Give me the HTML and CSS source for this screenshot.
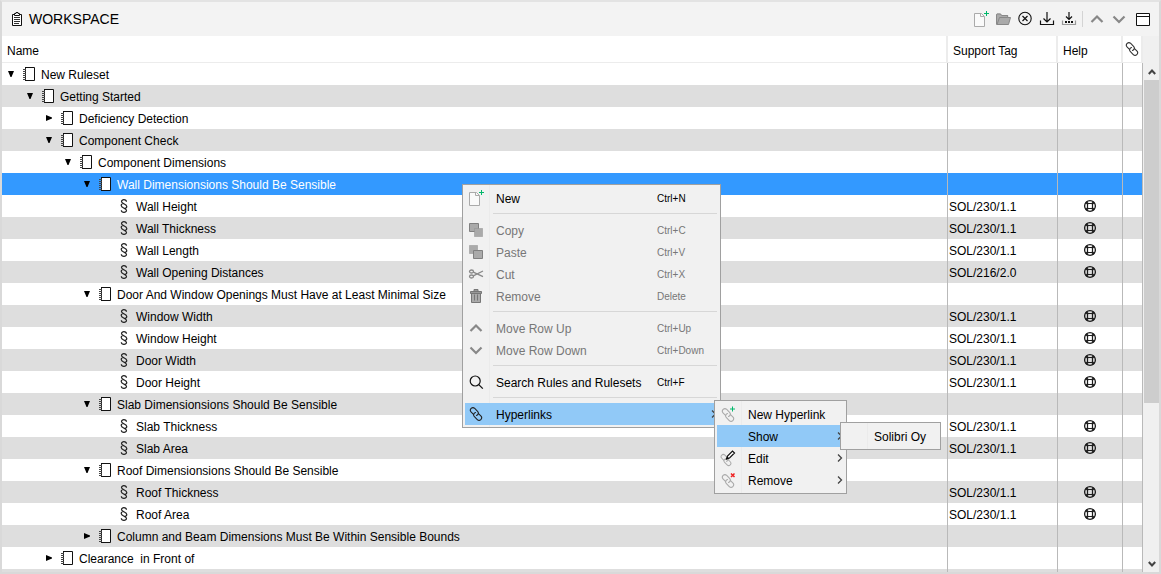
FILE: index.html
```html
<!DOCTYPE html>
<html lang="en">
<head>
<meta charset="utf-8">
<title>Workspace</title>
<link rel="stylesheet" href="styles.css">
</head>
<body>
<svg class="sprite" aria-hidden="true">
  <symbol id="book" viewBox="0 0 14 14"><path d="M3 .5h9.500v13H3z" fill="#fff"/><path d="M3 .5h9.500v13H3" fill="none" stroke="#111"/><path d="M3.500 1v12" stroke="#222" stroke-dasharray="1 1"/><path d="M1 2.500h3M1 4.500h3M1 6.500h3M1 8.500h3M1 10.500h3M1 12.500h3" stroke="#444"/></symbol>
  <symbol id="section" viewBox="0 0 14 14"><path d="M9.500 2.800C9.200 0 4.500 0 4.500 2.600c0 2.200 5.300 2.200 5.300 5 0 1.200-1.100 1.800-2.300 1.800M4.300 11.200c.3 2.800 5.200 2.800 5.200.2 0-2.300-5.300-2.200-5.300-5 0-1.200 1.100-1.900 2.300-1.900" fill="none" stroke="#222" stroke-width="1.200"/></symbol>
  <symbol id="expanded" viewBox="0 0 10 10"><path d="M2 2h6L5.500 8h-1z"/></symbol>
  <symbol id="collapsed" viewBox="0 0 10 10"><path d="M2 2l6 2.500v1L2 8z"/></symbol>
  <symbol id="lifebuoy" viewBox="0 0 14 14"><circle cx="7" cy="7" r="5.400" fill="none" stroke="#1c1c1c" stroke-width="1.300"/><path d="M3 3l2 2M11 3L9 5M3 11l2-2M11 11L9 9" stroke="#1c1c1c" stroke-width="2.200"/><rect x="4.500" y="4.500" width="5" height="5" rx="1" fill="none" stroke="#1c1c1c" stroke-width="1.200"/></symbol>
  <symbol id="link" viewBox="0 0 16 16"><g fill="none" stroke="currentColor" stroke-width="1.100" stroke-linecap="round" transform="rotate(45 8 8)"><path d="M6.500 10H3.200c-3.400 0-3.400-5 0-5h4c2.200 0 3.100 2 2.200 3.700"/><path d="M9.500 6h3.300c3.400 0 3.400 5 0 5h-4c-2.200 0-3.100-2-2.200-3.700"/></g></symbol>
  <symbol id="new-file" viewBox="0 0 18 18"><path d="M2.500 3.500h7l3 3v10h-10z" fill="#fafafa" stroke="#aaa"/><path d="M8.500 3.500v3h4" fill="none" stroke="#aaa"/><path d="M12 3.500h5M14.500 1v5" stroke="#00b86b"/></symbol>
  <symbol id="up" viewBox="0 0 16 16"><path d="M2.500 11L8 5.500l5.500 5.500" fill="none" stroke="currentColor" stroke-width="2.200"/></symbol>
  <symbol id="down" viewBox="0 0 16 16"><path d="M2.500 5.500L8 11l5.500-5.500" fill="none" stroke="currentColor" stroke-width="2.200"/></symbol>
  <symbol id="right" viewBox="0 0 8 8"><path d="M2 .5L5.500 4 2 7.500" fill="none" stroke="#444" stroke-width="1.300"/></symbol>
</svg>

<main class="workspace">
  <header class="titlebar">
    <svg class="i14" viewBox="0 0 14 14"><path d="M2.500 2.500h9v11h-9z" fill="#fff" stroke="#111"/><path d="M4.500 3.500v-2h1.500v-1h2v1h1.500v2z" fill="#fff" stroke="#111"/><path d="M4 5.500h6M4 7.500h6M4 9.500h6M4 11.500h5" stroke="#333"/></svg>
    <h1>WORKSPACE</h1>
    <div class="tools">
      <button aria-label="New"><svg class="i18"><use href="#new-file"/></svg></button>
      <button aria-label="Open"><svg class="i16" viewBox="0 0 16 16"><path d="M1 13.500V3.500l1-1h3.500l1.200 1.500H13v2.500h2.500l-2 7z" fill="#aaa"/><path d="M1.500 13.500V3.500l.5-.5h3.500l1.200 1.500h6V6.500H4.500l-2.500 7h11.500l2-7h-3" fill="none" stroke="#888"/></svg></button>
      <button aria-label="Close"><svg class="i16" viewBox="0 0 16 16"><circle cx="8" cy="7.500" r="6.200" fill="none" stroke="#111" stroke-width="1.100"/><path d="M5.500 5l5 5M10.500 5l-5 5" stroke="#111" stroke-width="1.200"/></svg></button>
      <button aria-label="Save"><svg class="i16" viewBox="0 0 16 16"><path d="M1.500 9.500v4h13v-4M8 1v9.500M4.500 7.500L8 11l3.500-3.500" fill="none" stroke="#111" stroke-width="1.200"/></svg></button>
      <button aria-label="Save As"><svg class="i16" viewBox="0 0 16 16"><path d="M1.500 9.500v4h13v-4" fill="none" stroke="#999" stroke-width="1.200"/><path d="M8 1v7.500M5 5.500L8 8.500l3-3" fill="none" stroke="#111" stroke-width="1.200"/><path d="M4 11h2M7 11h2M10 11h2" stroke="#111" stroke-width="2"/></svg></button>
      <span class="divider"></span>
      <button class="grey" aria-label="Previous"><svg class="i16"><use href="#up"/></svg></button>
      <button class="grey" aria-label="Next"><svg class="i16"><use href="#down"/></svg></button>
      <button class="window" aria-label="Window"><svg class="i16" viewBox="0 0 16 16"><path d="M1.500 2.500h13v12h-13z" fill="#fff" stroke="#111"/><path d="M1 5.500h14" stroke="#111"/></svg></button>
    </div>
  </header>

  <div class="pane">
    <div class="view">
    <table>
      <colgroup><col><col class="c-tag"><col class="c-help"><col class="c-link"></colgroup>
      <thead><tr><th>Name</th><th>Support Tag</th><th>Help</th><th class="icon-head"><svg class="i16" role="img" aria-label="Hyperlinks"><use href="#link"/></svg></th></tr></thead>
      <tbody>
        <tr><td><div class="node l0"><button class="toggle" aria-label="Collapse"><svg><use href="#expanded"/></svg></button><svg class="i14"><use href="#book"/></svg><span>New Ruleset</span></div></td><td></td><td></td><td></td></tr>
        <tr><td><div class="node l1"><button class="toggle" aria-label="Collapse"><svg><use href="#expanded"/></svg></button><svg class="i14"><use href="#book"/></svg><span>Getting Started</span></div></td><td></td><td></td><td></td></tr>
        <tr><td><div class="node l2"><button class="toggle" aria-label="Expand"><svg><use href="#collapsed"/></svg></button><svg class="i14"><use href="#book"/></svg><span>Deficiency Detection</span></div></td><td></td><td></td><td></td></tr>
        <tr><td><div class="node l2"><button class="toggle" aria-label="Collapse"><svg><use href="#expanded"/></svg></button><svg class="i14"><use href="#book"/></svg><span>Component Check</span></div></td><td></td><td></td><td></td></tr>
        <tr><td><div class="node l3"><button class="toggle" aria-label="Collapse"><svg><use href="#expanded"/></svg></button><svg class="i14"><use href="#book"/></svg><span>Component Dimensions</span></div></td><td></td><td></td><td></td></tr>
        <tr class="selected"><td><div class="node l4"><button class="toggle" aria-label="Collapse"><svg><use href="#expanded"/></svg></button><svg class="i14"><use href="#book"/></svg><span>Wall Dimensionsions Should Be Sensible</span></div></td><td></td><td></td><td></td></tr>
        <tr><td><div class="node rule"><svg class="i14"><use href="#section"/></svg><span>Wall Height</span></div></td><td><span>SOL/230/1.1</span></td><td><button class="help" aria-label="Help"><svg class="i14"><use href="#lifebuoy"/></svg></button></td><td></td></tr>
        <tr><td><div class="node rule"><svg class="i14"><use href="#section"/></svg><span>Wall Thickness</span></div></td><td><span>SOL/230/1.1</span></td><td><button class="help" aria-label="Help"><svg class="i14"><use href="#lifebuoy"/></svg></button></td><td></td></tr>
        <tr><td><div class="node rule"><svg class="i14"><use href="#section"/></svg><span>Wall Length</span></div></td><td><span>SOL/230/1.1</span></td><td><button class="help" aria-label="Help"><svg class="i14"><use href="#lifebuoy"/></svg></button></td><td></td></tr>
        <tr><td><div class="node rule"><svg class="i14"><use href="#section"/></svg><span>Wall Opening Distances</span></div></td><td><span>SOL/216/2.0</span></td><td><button class="help" aria-label="Help"><svg class="i14"><use href="#lifebuoy"/></svg></button></td><td></td></tr>
        <tr><td><div class="node l4"><button class="toggle" aria-label="Collapse"><svg><use href="#expanded"/></svg></button><svg class="i14"><use href="#book"/></svg><span>Door And Window Openings Must Have at Least Minimal Size</span></div></td><td></td><td></td><td></td></tr>
        <tr><td><div class="node rule"><svg class="i14"><use href="#section"/></svg><span>Window Width</span></div></td><td><span>SOL/230/1.1</span></td><td><button class="help" aria-label="Help"><svg class="i14"><use href="#lifebuoy"/></svg></button></td><td></td></tr>
        <tr><td><div class="node rule"><svg class="i14"><use href="#section"/></svg><span>Window Height</span></div></td><td><span>SOL/230/1.1</span></td><td><button class="help" aria-label="Help"><svg class="i14"><use href="#lifebuoy"/></svg></button></td><td></td></tr>
        <tr><td><div class="node rule"><svg class="i14"><use href="#section"/></svg><span>Door Width</span></div></td><td><span>SOL/230/1.1</span></td><td><button class="help" aria-label="Help"><svg class="i14"><use href="#lifebuoy"/></svg></button></td><td></td></tr>
        <tr><td><div class="node rule"><svg class="i14"><use href="#section"/></svg><span>Door Height</span></div></td><td><span>SOL/230/1.1</span></td><td><button class="help" aria-label="Help"><svg class="i14"><use href="#lifebuoy"/></svg></button></td><td></td></tr>
        <tr><td><div class="node l4"><button class="toggle" aria-label="Collapse"><svg><use href="#expanded"/></svg></button><svg class="i14"><use href="#book"/></svg><span>Slab Dimensionsions Should Be Sensible</span></div></td><td></td><td></td><td></td></tr>
        <tr><td><div class="node rule"><svg class="i14"><use href="#section"/></svg><span>Slab Thickness</span></div></td><td><span>SOL/230/1.1</span></td><td><button class="help" aria-label="Help"><svg class="i14"><use href="#lifebuoy"/></svg></button></td><td></td></tr>
        <tr><td><div class="node rule"><svg class="i14"><use href="#section"/></svg><span>Slab Area</span></div></td><td><span>SOL/230/1.1</span></td><td><button class="help" aria-label="Help"><svg class="i14"><use href="#lifebuoy"/></svg></button></td><td></td></tr>
        <tr><td><div class="node l4"><button class="toggle" aria-label="Collapse"><svg><use href="#expanded"/></svg></button><svg class="i14"><use href="#book"/></svg><span>Roof Dimensionsions Should Be Sensible</span></div></td><td></td><td></td><td></td></tr>
        <tr><td><div class="node rule"><svg class="i14"><use href="#section"/></svg><span>Roof Thickness</span></div></td><td><span>SOL/230/1.1</span></td><td><button class="help" aria-label="Help"><svg class="i14"><use href="#lifebuoy"/></svg></button></td><td></td></tr>
        <tr><td><div class="node rule"><svg class="i14"><use href="#section"/></svg><span>Roof Area</span></div></td><td><span>SOL/230/1.1</span></td><td><button class="help" aria-label="Help"><svg class="i14"><use href="#lifebuoy"/></svg></button></td><td></td></tr>
        <tr><td><div class="node l4"><button class="toggle" aria-label="Expand"><svg><use href="#collapsed"/></svg></button><svg class="i14"><use href="#book"/></svg><span>Column and Beam Dimensions Must Be Within Sensible Bounds</span></div></td><td></td><td></td><td></td></tr>
        <tr><td><div class="node l2"><button class="toggle" aria-label="Expand"><svg><use href="#collapsed"/></svg></button><svg class="i14"><use href="#book"/></svg><span>Clearance  in Front of</span></div></td><td></td><td></td><td></td></tr>
        <tr><td></td><td></td><td></td><td></td></tr>
      </tbody>
    </table>
    </div>
    <div class="scrollbar">
      <button aria-label="Scroll up"><svg viewBox="0 0 8 8"><path d="M.8 6L4 2.500 7.200 6" fill="none" stroke="#444" stroke-width="2"/></svg></button>
      <div class="track"><div class="thumb"></div></div>
      <button aria-label="Scroll down"><svg viewBox="0 0 8 8"><path d="M.8 2L4 5.500 7.200 2" fill="none" stroke="#444" stroke-width="2"/></svg></button>
    </div>
  </div>

  <div class="menu context" role="menu">
    <button class="item" role="menuitem"><span class="ico"><svg class="i18"><use href="#new-file"/></svg></span><span class="label">New</span><kbd>Ctrl+N</kbd></button>
    <hr>
    <button class="item" role="menuitem" disabled><span class="ico"><svg class="i16" viewBox="0 0 16 16"><path d="M1.500 1.500h9v8h-9z" fill="#aaa" stroke="#808080"/><path d="M6.500 6.500h8v8h-8z" fill="#aaa" stroke="#909090" stroke-dasharray="1 1"/></svg></span><span class="label">Copy</span><kbd>Ctrl+C</kbd></button>
    <button class="item" role="menuitem" disabled><span class="ico"><svg class="i16" viewBox="0 0 16 16"><path d="M1.500 1.500h8v8h-8z" fill="#aaa" stroke="#909090" stroke-dasharray="1 1"/><path d="M5.500 6.500h9v8h-9z" fill="#aaa" stroke="#808080"/></svg></span><span class="label">Paste</span><kbd>Ctrl+V</kbd></button>
    <button class="item" role="menuitem" disabled><span class="ico"><svg class="i16" viewBox="0 0 16 16"><g fill="none" stroke="#888" stroke-width="1.300"><ellipse cx="3.500" cy="5.500" rx="2" ry="1.500"/><ellipse cx="3.500" cy="10.500" rx="2" ry="1.500"/><path d="M5.300 6.200L15 10.700M5.300 9.800L15 5"/></g></svg></span><span class="label">Cut</span><kbd>Ctrl+X</kbd></button>
    <button class="item" role="menuitem" disabled><span class="ico"><svg class="i16" viewBox="0 0 16 16"><path d="M3.500 5h9v9.500h-9z" fill="#aaa" stroke="#777"/><path d="M2.500 3.500h11v2h-11zM6 3V1.500h4V3" fill="#999" stroke="#777"/><path d="M6.500 6.500v6M9.500 6.500v6" stroke="#777"/></svg></span><span class="label">Remove</span><kbd>Delete</kbd></button>
    <hr>
    <button class="item" role="menuitem" disabled><span class="ico"><svg class="i16"><use href="#up"/></svg></span><span class="label">Move Row Up</span><kbd>Ctrl+Up</kbd></button>
    <button class="item" role="menuitem" disabled><span class="ico"><svg class="i16"><use href="#down"/></svg></span><span class="label">Move Row Down</span><kbd>Ctrl+Down</kbd></button>
    <hr>
    <button class="item" role="menuitem"><span class="ico"><svg class="i16" viewBox="0 0 16 16"><circle cx="7.200" cy="7" r="5" fill="none" stroke="#111" stroke-width="1.200"/><path d="M10.800 10.600l4 4" stroke="#111" stroke-width="1.300"/></svg></span><span class="label">Search Rules and Rulesets</span><kbd>Ctrl+F</kbd></button>
    <hr>
    <div class="branch">
      <button class="item active" role="menuitem"><span class="ico"><svg class="i16"><use href="#link"/></svg></span><span class="label">Hyperlinks</span><svg class="arrow"><use href="#right"/></svg></button>
      <div class="menu links" role="menu">
        <button class="item" role="menuitem"><span class="ico pale"><svg class="i18" viewBox="0 0 18 18"><use href="#link" x="1" y="2" width="16" height="16"/><path d="M11 4h5M13.500 1.500v5" stroke="#00b86b"/></svg></span><span class="label">New Hyperlink</span></button>
        <div class="branch">
          <button class="item active" role="menuitem"><span class="ico"></span><span class="label">Show</span><svg class="arrow"><use href="#right"/></svg></button>
          <div class="menu targets" role="menu">
            <button class="item" role="menuitem"><span class="ico"></span><span class="label">Solibri Oy</span></button>
          </div>
        </div>
        <button class="item" role="menuitem"><span class="ico pale"><svg class="i18" viewBox="0 0 18 18"><use href="#link" x="0" y="4" width="14" height="14"/><path d="M7.500 10l1-3 5-5 2 2-5 5z" fill="#fff" stroke="#111" stroke-width="1.200"/><path d="M7 10.500l1.300-3 1.900 1.800z" fill="#111"/></svg></span><span class="label">Edit</span><svg class="arrow"><use href="#right"/></svg></button>
        <button class="item" role="menuitem"><span class="ico pale"><svg class="i18" viewBox="0 0 18 18"><use href="#link" x="1" y="2" width="16" height="16"/><path d="M12 2.500l3.500 3.500M15.500 2.500L12 6" stroke="#e22" stroke-width="1.500"/></svg></span><span class="label">Remove</span><svg class="arrow"><use href="#right"/></svg></button>
      </div>
    </div>
  </div>
</main>
</body>
</html>
```
FILE: styles.css
```css
* { box-sizing: border-box; }
body { margin: 0; font: 12px/20px "Liberation Sans", Arial, sans-serif; color: #000; }
button { margin: 0; padding: 0; border: 0; background: none; font: inherit; color: inherit; display: flex; align-items: center; justify-content: center; }
svg { display: block; flex: none; }
.sprite { position: absolute; width: 0; height: 0; }
.i14 { width: 14px; height: 14px; }
.i16 { width: 16px; height: 16px; }
.i18 { width: 18px; height: 18px; }

.workspace { position: relative; display: flex; flex-direction: column; height: 100vh; overflow: hidden; border: 2px solid #d9d9d9; border-top-color: #e3e3e3; background: #f0f0f0; }
.titlebar { flex: none; display: flex; align-items: center; gap: 5px; height: 34px; padding: 0 5px 0 8px; background: #f3f3f3; }
h1 { margin: 0; font-size: 14px; font-weight: normal; }
.tools { display: flex; align-items: center; margin-left: auto; }
.tools button { width: 22px; height: 22px; }
.tools .grey { color: #888; }
.tools .window { margin-left: 2px; }
.divider { width: 1px; height: 16px; margin: 0 3px 0 2px; background: #d4d4d4; }

.pane { flex: 1; min-height: 0; display: flex; }
.view { flex: 1; min-width: 0; overflow: hidden; }
table { width: 100%; table-layout: fixed; border-collapse: separate; border-spacing: 0; background: #fff; }
.c-tag { width: 110px; }
.c-help { width: 65px; }
.c-link { width: 20px; }
th { height: 27px; padding: 4px 5px 0; border-right: 2px solid #ececec; border-bottom: 1px solid #ececec; font-weight: normal; text-align: left; }
.icon-head { padding: 0 0 0 1px; color: #333; }
td { height: 22px; padding: 0 1px; border-right: 1px solid #b9b9b9; white-space: nowrap; overflow: hidden; }
td span { display: block; padding-top: 2px; }
tbody tr:nth-child(even) { background: #dedede; }
tbody .selected:nth-child(n) { background: #3399ff; }
.selected span { color: #fff; }
.node { display: flex; align-items: center; height: 22px; padding-left: 3px; }
.node span { padding-left: 5px; white-space: pre; }
.l1 { padding-left: 22px; }
.l2 { padding-left: 41px; }
.l3 { padding-left: 60px; }
.l4 { padding-left: 79px; }
.rule { padding-left: 114px; }
.toggle { margin-right: 6px; }
.toggle svg { width: 10px; height: 10px; }
.help { width: 100%; }

.scrollbar { flex: none; display: flex; flex-direction: column; width: 16px; padding: 27px 0 0 1px; }
.scrollbar button { height: 17px; }
.scrollbar svg { width: 8px; height: 8px; }
.track { flex: 1; }
.thumb { height: 68%; background: #cdcdcd; }

.menu { position: absolute; padding: 2px; border: 1px solid #a0a0a0; background: linear-gradient(90deg, #f1f1f1 26px, #ebebeb 26px, #ebebeb 27px, #f1f1f1 27px); }
.context { left: 460px; top: 182px; width: 259px; }
.links { left: 249px; top: -3px; width: 133px; }
.targets { left: 123px; top: -3px; width: 101px; }
.branch { position: relative; }
.item { width: 100%; height: 22px; justify-content: flex-start; text-align: left; white-space: nowrap; }
.item:disabled { color: #777; }
.active { background: #91c9f7; }
.ico { flex: none; display: flex; justify-content: center; width: 22px; margin-right: 9px; color: #222; }
.item:disabled .ico { color: #888; }
.ico.pale { color: #aaa; }
.label { flex: 1; padding-top: 2px; }
kbd { width: 61px; padding-top: 2px; font: 10px/20px "Liberation Sans", Arial, sans-serif; }
.arrow { width: 8px; height: 8px; }
hr { height: 1px; margin: 4px 1px 5px 28px; border: 0; background: #d7d7d7; }
```
